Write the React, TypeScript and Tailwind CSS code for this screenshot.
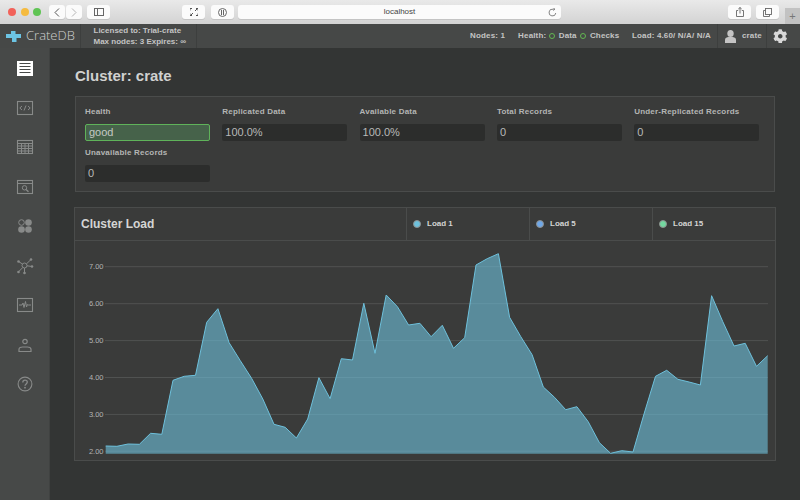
import { FaCog } from 'react-icons/fa'

const sans = { fontFamily: '"Liberation Sans", Arial, sans-serif' }

const stats = [
  { label: 'Health', value: 'good', good: true },
  { label: 'Replicated Data', value: '100.0%' },
  { label: 'Available Data', value: '100.0%' },
  { label: 'Total Records', value: '0' },
  { label: 'Under-Replicated Records', value: '0' },
  { label: 'Unavailable Records', value: '0' },
]

const loads = [
  { name: 'Load 1', color: 'bg-[#6ec1dc]' },
  { name: 'Load 5', color: 'bg-[#6fa8e8]' },
  { name: 'Load 15', color: 'bg-[#74d8a0]' },
]

// y pixel of every sample, 11.22px apart
const samples = [
  446, 446.3, 444, 444.3, 433.3, 434.3, 380.3, 376.3, 375.3, 322.3, 308.7, 342.7, 360.7, 378.3, 399, 424.3, 427.3,
  438, 419, 377.7, 398.7, 358.7, 360, 303.3, 353.3, 295, 306.7, 325, 323.3, 336.7, 325.3, 348.3, 337.7, 265, 258.7,
  253.7, 317.3, 336.7, 354.7, 387, 397.3, 409.7, 406.7, 421.7, 442.7, 453.3, 450.7, 452, 413, 376.3, 370.3, 379.3,
  382, 385, 295.7, 321.7, 346, 343.3, 366.3, 355.7,
]
const line = samples.map((y, i) => `${(105.7 + i * 11.22).toFixed(1)},${y}`).join(' ')
const grid = [
  { y: 266.7, label: '7.00' },
  { y: 303.7, label: '6.00' },
  { y: 340.6, label: '5.00' },
  { y: 377.5, label: '4.00' },
  { y: 414.4, label: '3.00' },
  { y: 451.2, label: '2.00' },
]

function ToolButton({ className, children }: { className: string; children: React.ReactNode }) {
  return (
    <div className={`h-[14px] rounded-[3px] bg-[#fbfbfb] shadow-[0_1px_0_#c4c4c4] flex items-center justify-center ${className}`}>
      {children}
    </div>
  )
}

function BrowserBar() {
  return (
    <div className="h-[24px] shrink-0 flex items-center pl-[8px] bg-gradient-to-b from-[#e9e9e9] to-[#d3d3d3] relative">
      <div className="flex gap-[4.5px]">
        <span className="w-[8px] h-[8px] rounded-full bg-[#f2625a]" />
        <span className="w-[8px] h-[8px] rounded-full bg-[#f5bb40]" />
        <span className="w-[8px] h-[8px] rounded-full bg-[#5fc454]" />
      </div>
      <div className="ml-[8px] flex gap-[1px]">
        <ToolButton className="w-[16px]">
          <svg width="6" height="9" viewBox="0 0 6 9" fill="none" stroke="#555" strokeWidth="1">
            <path d="M5 .5 1 4.5 5 8.5" />
          </svg>
        </ToolButton>
        <ToolButton className="w-[16px]">
          <svg width="6" height="9" viewBox="0 0 6 9" fill="none" stroke="#b5b5b5" strokeWidth="1">
            <path d="M1 .5 5 4.5 1 8.5" />
          </svg>
        </ToolButton>
      </div>
      <ToolButton className="ml-[5px] w-[23px]">
        <svg width="10" height="8" viewBox="0 0 10 8" fill="none" stroke="#666" strokeWidth="1">
          <rect x=".5" y=".5" width="9" height="7" />
          <path d="M3.5 .5v7" />
        </svg>
      </ToolButton>
      <ToolButton className="ml-[72px] w-[23px]">
        <svg width="8" height="8" viewBox="0 0 8 8" fill="none" stroke="#555" strokeWidth="1">
          <path d="M0 2.5V.5h2M6 .5h2v2M8 5.5v2H6M2 7.5H0v-2" />
          <path d="M5 3 7 1M3 5 1 7" />
        </svg>
      </ToolButton>
      <ToolButton className="ml-[6px] w-[23px]">
        <svg width="9" height="9" viewBox="0 0 9 9">
          <circle cx="4.5" cy="4.5" r="4" fill="none" stroke="#666" />
          <rect x="3" y="2" width="1" height="5" fill="#666" />
          <rect x="5" y="2" width="1" height="5" fill="#666" />
        </svg>
      </ToolButton>
      <div className="ml-[4px] w-[323px] h-[14px] rounded-[3px] bg-[#fbfbfb] shadow-[0_1px_0_#c4c4c4] flex items-center justify-center relative">
        <span className="text-[8px] text-[#444]" style={sans}>
          localhost
        </span>
        <svg className="absolute right-[4px] top-[2.5px]" width="9" height="9" viewBox="0 0 9 9" fill="none" stroke="#777" strokeWidth=".9">
          <path d="M7.8 5A3.4 3.4 0 1 1 5 1.2h1.6M5.4 0 6.9 1.2 5.4 2.6" />
        </svg>
      </div>
      <ToolButton className="ml-[167px] w-[23px]">
        <svg width="8" height="10" viewBox="0 0 8 10" fill="none" stroke="#666" strokeWidth=".9">
          <path d="M2.2 3.5H.5v6h7v-6H5.8M4 6.5V.5M2.3 2 4 .5 5.700 2" />
        </svg>
      </ToolButton>
      <ToolButton className="ml-[5px] w-[23px]">
        <svg width="9" height="9" viewBox="0 0 9 9" fill="none" stroke="#666" strokeWidth=".9">
          <rect x="2.500" y=".5" width="6" height="6" />
          <path d="M2.500 2.500H.5v6h6v-2" />
        </svg>
      </ToolButton>
      <div className="absolute right-0 bottom-0 w-[15px] h-[16px] bg-[#c2c2c2] flex items-center justify-center text-[11px] text-[#777]" style={sans}>
        +
      </div>
    </div>
  )
}

function TopNav() {
  return (
    <div className="h-[24px] shrink-0 flex items-center bg-[#464847] text-[#c4c4c4] font-bold text-[8px]" style={sans}>
      <div className="w-[81px] h-full border-r border-[#3d3f3e] flex items-center pl-[6px] gap-[5px]">
        <svg width="15" height="11" viewBox="0 0 15 11" fill="#6cc4e4">
          <path d="M5 3V0h4.500v3H15v4h-4.500v4H6V7H0V3z" />
        </svg>
        <span className="text-[13px] font-light text-[#cfd0cf]" style={{ fontFamily: '"Open Sans", sans-serif' }}>
          CrateDB
        </span>
      </div>
      <div className="w-[116px] h-full border-r border-[#3d3f3e] pl-[12.500px] flex flex-col justify-center leading-[11px]">
        <div>Licensed to: Trial-crate</div>
        <div>Max nodes: 3 Expires: ∞</div>
      </div>
      <div className="ml-auto flex items-center h-full tracking-[.15px]">
        <span>Nodes: 1</span>
        <span className="ml-[13px]">Health:</span>
        <span className="ml-[3px] w-[6px] h-[6px] rounded-full border-[1.5px] border-[#62b851]" />
        <span className="ml-[3.500px]">Data</span>
        <span className="ml-[3.700px] w-[6px] h-[6px] rounded-full border-[1.5px] border-[#62b851]" />
        <span className="ml-[3.500px]">Checks</span>
        <span className="ml-[12.700px]">Load: 4.60/ N/A/ N/A</span>
        <div className="ml-[6px] h-full w-[50px] border-l border-r border-[#3d3f3e] flex items-center pl-[7px] gap-[6px]">
          <svg width="11" height="13" viewBox="0 0 11 13" fill="#c4c4c4">
            <ellipse cx="5.500" cy="3.500" rx="3.200" ry="3.500" />
            <path d="M0 13V9.500C0 8 2 7 3.500 7h4C9 7 11 8 11 9.500V13z" />
          </svg>
          <span className="font-bold text-[8px]">crate</span>
        </div>
        <div className="w-[33px] flex pl-[6px]">
          <FaCog className="text-[#d8d8d8] text-[14.500px]" />
        </div>
      </div>
    </div>
  )
}

function SideIcon({ children, active }: { children: React.ReactNode; active?: boolean }) {
  return (
    <div className={`h-[39.500px] flex items-center justify-center ${active ? 'text-white' : 'text-[#888a89]'}`}>
      <svg width="18" height="18" viewBox="0 0 18 18" fill="none" stroke="currentColor" strokeWidth="1">
        {children}
      </svg>
    </div>
  )
}

function SideBar() {
  return (
    <div className="w-[50px] shrink-0 bg-[#474948] border-r border-[#404241] pt-[.5px]">
      <SideIcon active>
        <rect x="1" y="2" width="16" height="15" fill="currentColor" stroke="none" />
        <path d="M3.500 4.500h11M3.500 7.500h11M3.500 10.500h11M3.500 13.500h11" stroke="#474948" strokeWidth="1.100" />
      </SideIcon>
      <SideIcon>
        <rect x="1.500" y="2.500" width="15" height="13" strokeWidth="1.100" />
        <path d="M6 7 3.800 9 6 11M12 7l2.200 2-2.200 2M10 6.500l-2 5" />
      </SideIcon>
      <SideIcon>
        <rect x="1.500" y="2.500" width="15" height="13" strokeWidth="1.100" />
        <path d="M1.500 5.500h15M1.500 8h15M1.500 10.500h15M1.500 13h15M5.500 5.500v10M9 5.500v10M12.500 5.500v10" />
      </SideIcon>
      <SideIcon>
        <rect x="1.500" y="2.500" width="15" height="13" strokeWidth="1.100" />
        <path d="M1.500 5.500h15" />
        <circle cx="8.500" cy="9.800" r="2.200" />
        <path d="m10 11.500 2.500 2.300" strokeWidth="1.300" />
      </SideIcon>
      <SideIcon>
        <circle cx="5.500" cy="5.500" r="2.800" strokeWidth="1" />
        <circle cx="12.500" cy="5.500" r="3.300" fill="currentColor" stroke="none" />
        <circle cx="5.500" cy="12.500" r="3.300" fill="currentColor" stroke="none" />
        <circle cx="12.500" cy="12.500" r="3.300" fill="currentColor" stroke="none" />
      </SideIcon>
      <SideIcon>
        <circle cx="8.500" cy="8.500" r="2.500" />
        <path d="M2.500 4.500 6.500 7M15 2.500 10.500 6.800M16 9.500l-5-.7M2.800 14.500 6.800 10.500M8.500 11v5" />
        <g fill="currentColor" stroke="none">
          <circle cx="2.500" cy="4.500" r="1.300" />
          <circle cx="15" cy="2.500" r="1.300" />
          <circle cx="16" cy="9.500" r="1.300" />
          <circle cx="2.500" cy="15" r="1.300" />
          <circle cx="8.500" cy="16" r="1.300" />
        </g>
      </SideIcon>
      <SideIcon>
        <rect x="1.500" y="2.500" width="15" height="13" strokeWidth="1.100" />
        <path d="M3 9h3l1-2 1 4.500 1.500-6 1 5.500 1-2.500.7.500H15" />
      </SideIcon>
      <SideIcon>
        <circle cx="9" cy="5.500" r="2.200" strokeWidth="1.200" />
        <path d="M3 15.500v-2.200c0-1.400 2-2.300 3.500-2.300h5c1.500 0 3.500.9 3.500 2.300v2.200z" strokeWidth="1.200" />
      </SideIcon>
      <SideIcon>
        <circle cx="9" cy="9" r="6.900" strokeWidth="1.100" />
        <path d="M6.800 7.400C6.800 5.900 7.800 5.100 9 5.100s2.300.8 2.300 2c0 1.700-2.300 1.900-2.300 3.700" strokeWidth="1.300" />
        <circle cx="9" cy="12.700" r=".9" fill="currentColor" stroke="none" />
      </SideIcon>
    </div>
  )
}

function StatsPanel() {
  return (
    <div className="mt-[12px] ml-[1px] w-[700px] h-[96px] border border-[#4a4c4b] bg-[#3a3b3a] pl-[9px] pt-[9px]">
      <div className="grid grid-cols-[repeat(5,125px)] gap-x-[12.300px]">
        {stats.map((s) => (
          <div key={s.label} className="h-[41px]">
            <div className="h-[12px] leading-[12px] text-[8px] font-bold tracking-[.2px] text-[#b4b5b4]">{s.label}</div>
            <div
              className={`mt-[5.500px] h-[17.500px] rounded-[2px] px-[3px] flex items-center text-[11px] ${
                s.good ? 'bg-[#46624a] border border-[#5fb35a] text-[#c4c8c4]' : 'bg-[#2c2d2c] text-[#b8b9b8]'
              }`}
            >
              {s.value}
            </div>
          </div>
        ))}
      </div>
    </div>
  )
}

function LoadPanel() {
  return (
    <div className="mt-[15px] w-[702px] h-[254px] border border-[#4a4c4b] bg-[#3a3b3a] flex flex-col">
      <div className="h-[33px] shrink-0 flex border-b border-[#4a4c4b]">
        <div className="w-[331px] pl-[6px] flex items-center text-[12px] font-bold text-[#d4d5d4]">Cluster Load</div>
        {loads.map((l) => (
          <div key={l.name} className="w-[123px] border-l border-[#4a4c4b] flex items-center pl-[6px] gap-[6px] text-[8px] font-bold text-[#d4d5d4]">
            <span className={`w-[8px] h-[8px] rounded-full border border-[#8e908f] ${l.color}`} />
            {l.name}
          </div>
        ))}
      </div>
      <svg className="block flex-1 w-full" viewBox="75 241 700 219" fill="none">
        {grid.map((g) => (
          <g key={g.label}>
            <line x1="105" x2="768" y1={g.y} y2={g.y} stroke="#505251" strokeWidth="1" />
            <text x="103.500" y={g.y + 2.700} textAnchor="end" fill="#b4b5b4" fontSize="7.500" fontFamily="Liberation Sans, sans-serif">
              {g.label}
            </text>
          </g>
        ))}
        <polygon points={`105.700,453.800 ${line} 767.700,453.800`} fill="#6ec1dc" fillOpacity=".6" />
        <polyline points={line} stroke="#6ec1dc" strokeWidth="1" />
      </svg>
    </div>
  )
}

export default function App() {
  return (
    <div className="w-[800px] h-[500px] overflow-hidden flex flex-col bg-[#333534]" style={sans}>
      <BrowserBar />
      <TopNav />
      <div className="flex flex-1 min-h-0">
        <SideBar />
        <main className="flex-1 pl-[24px] pt-[19px]">
          <h1 className="ml-[1px] h-[17px] leading-[17px] text-[15px] font-bold text-[#d0d1d0]">Cluster: crate</h1>
          <StatsPanel />
          <LoadPanel />
        </main>
      </div>
    </div>
  )
}
